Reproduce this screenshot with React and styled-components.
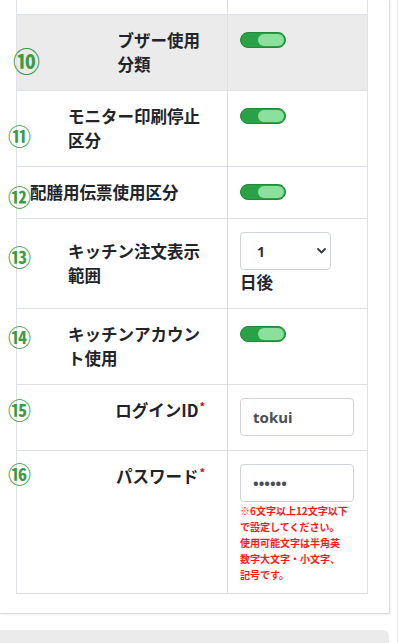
import React from "react";
import styled, { createGlobalStyle } from "styled-components";

const GlobalStyle = createGlobalStyle`
  html, body {
    margin: 0;
    padding: 0;
    background: #ffffff;
    font-family: "Noto Sans", "Noto Sans CJK JP", sans-serif;
  }
`;

const Page = styled.div`
  width: 397px;
  height: 643px;
  overflow: hidden;
  border-right: 1px solid #e9e9e9;
`;

const Card = styled.div`
  box-sizing: border-box;
  width: 390px;
  padding: 0 21px 19px 16px;
  background: #ffffff;
  border-right: 1px solid #dcdcdc;
  border-bottom: 1px solid #dcdcdc;
  box-shadow: 1px 1px 2px rgba(0, 0, 0, 0.06);
`;

const Table = styled.div`
  width: 352px;
  box-sizing: border-box;
  border-left: 1px solid #dee2e6;
  border-right: 1px solid #dee2e6;
`;

const Row = styled.div`
  position: relative;
  display: grid;
  grid-template-columns: 211px 1fr;
  border-bottom: 1px solid #dee2e6;
  background: ${(p) => (p.$shade ? "#ebebeb" : "#ffffff")};
  min-height: ${(p) => p.$minH || 0}px;
`;

const LabelCell = styled.div`
  display: flex;
  justify-content: ${(p) => (p.$left ? "flex-start" : "flex-end")};
  align-items: ${(p) => (p.$top ? "flex-start" : "center")};
  padding: 13px ${(p) => p.$pr ?? 27}px 14px 13px;
  border-right: 1px solid #dee2e6;
`;

const ValueCell = styled.div`
  display: flex;
  flex-direction: column;
  align-items: flex-start;
  padding: 13px 12px ${(p) => p.$pb ?? 14}px 12px;
`;

const Label = styled.div`
  font-family: "Noto Sans CJK JP", "Noto Sans", sans-serif;
  font-size: 16.5px;
  font-weight: 700;
  line-height: 24px;
  color: #212529;
  white-space: nowrap;
  text-align: left;
`;

const Required = styled.span`
  color: #e60012;
  font-size: 11px;
  vertical-align: top;
  line-height: 16px;
  margin-left: 1px;
`;

const Num = styled.span`
  position: absolute;
  left: ${(p) => p.$x ?? -9}px;
  top: ${(p) => p.$y}px;
  font-family: "Noto Sans CJK JP", sans-serif;
  font-size: ${(p) => p.$size ?? 23}px;
  font-weight: 700;
  line-height: 1;
  color: #3d9b47;
`;

const Track = styled.span`
  box-sizing: border-box;
  display: flex;
  justify-content: flex-end;
  width: 46px;
  height: 16px;
  margin-top: 4px;
  padding: 1px;
  border-radius: 8px;
  background: #2aa146;
  border: 1px solid #1f8a38;
`;

const Knob = styled.span`
  width: 26px;
  height: 12px;
  border-radius: 6px;
  background: #8be09e;
`;

const SelectWrap = styled.div`
  position: relative;
  width: 91px;
  height: 38px;
`;

const Select = styled.select`
  appearance: none;
  box-sizing: border-box;
  width: 100%;
  height: 100%;
  padding: 0 16px;
  border: 1px solid #ced4da;
  border-radius: 4px;
  background: #ffffff;
  font-family: "Noto Sans", sans-serif;
  font-size: 14px;
  font-weight: 700;
  color: #333333;
`;

const Chevron = styled.svg`
  position: absolute;
  right: 5px;
  top: 16px;
  pointer-events: none;
`;

const Unit = styled(Label)`
  line-height: 24px;
`;

const Input = styled.input`
  box-sizing: border-box;
  width: 114px;
  height: 38px;
  padding: 0 12px;
  border: 1px solid #ced4da;
  border-radius: 4px;
  font-family: "Noto Sans", sans-serif;
  font-size: 15px;
  font-weight: 700;
  color: #495057;
  outline: none;
`;

const Help = styled.div`
  width: 108px;
  margin-top: 1px;
  font-family: "Noto Sans CJK JP", sans-serif;
  font-size: 10px;
  font-weight: 700;
  line-height: 16px;
  color: #ff1a1a;
`;

const Footer = styled.div`
  margin-top: 16px;
  width: 389px;
  height: 40px;
  background: #ebebeb;
  border-radius: 0 6px 0 0;
`;

function Toggle() {
  return (
    <Track>
      <Knob />
    </Track>
  );
}

export default function App() {
  return (
    <Page>
      <GlobalStyle />
      <Card>
        <Table>
          <Row $minH={14}>
            <LabelCell style={{ padding: 0 }} />
            <div />
          </Row>

          <Row $shade>
            <Num $x={-4} $y={32} $size={27}>⑩</Num>
            <LabelCell>
              <Label>
                ブザー使用
                <br />
                分類
              </Label>
            </LabelCell>
            <ValueCell>
              <Toggle />
            </ValueCell>
          </Row>

          <Row>
            <Num $y={33}>⑪</Num>
            <LabelCell>
              <Label>
                モニター印刷停止
                <br />
                区分
              </Label>
            </LabelCell>
            <ValueCell>
              <Toggle />
            </ValueCell>
          </Row>

          <Row>
            <Num $y={18}>⑫</Num>
            <LabelCell $left>
              <Label>配膳用伝票使用区分</Label>
            </LabelCell>
            <ValueCell>
              <Toggle />
            </ValueCell>
          </Row>

          <Row>
            <Num $y={26}>⑬</Num>
            <LabelCell>
              <Label>
                キッチン注文表示
                <br />
                範囲
              </Label>
            </LabelCell>
            <ValueCell>
              <SelectWrap>
                <Select defaultValue="1">
                  <option value="1">1</option>
                  <option value="2">2</option>
                  <option value="3">3</option>
                </Select>
                <Chevron width="9" height="6" viewBox="0 0 9 6">
                  <path
                    d="M1 1 L4.5 4.5 L8 1"
                    fill="none"
                    stroke="#343a40"
                    strokeWidth="1.8"
                    strokeLinecap="round"
                    strokeLinejoin="round"
                  />
                </Chevron>
              </SelectWrap>
              <Unit>日後</Unit>
            </ValueCell>
          </Row>

          <Row>
            <Num $y={16}>⑭</Num>
            <LabelCell>
              <Label>
                キッチンアカウン
                <br />
                ト使用
              </Label>
            </LabelCell>
            <ValueCell>
              <Toggle />
            </ValueCell>
          </Row>

          <Row>
            <Num $y={13}>⑮</Num>
            <LabelCell $top $pr={22}>
              <Label>
                ログインID<Required>*</Required>
              </Label>
            </LabelCell>
            <ValueCell>
              <Input type="text" defaultValue="tokui" />
            </ValueCell>
          </Row>

          <Row>
            <Num $y={11}>⑯</Num>
            <LabelCell $top $pr={22}>
              <Label>
                パスワード<Required>*</Required>
              </Label>
            </LabelCell>
            <ValueCell $pb={10}>
              <Input type="password" defaultValue="123456" />
              <Help>
                ※6文字以上12文字以下で設定してください。使用可能文字は半角英数字大文字・小文字、記号です。
              </Help>
            </ValueCell>
          </Row>
        </Table>
      </Card>
      <Footer />
    </Page>
  );
}
